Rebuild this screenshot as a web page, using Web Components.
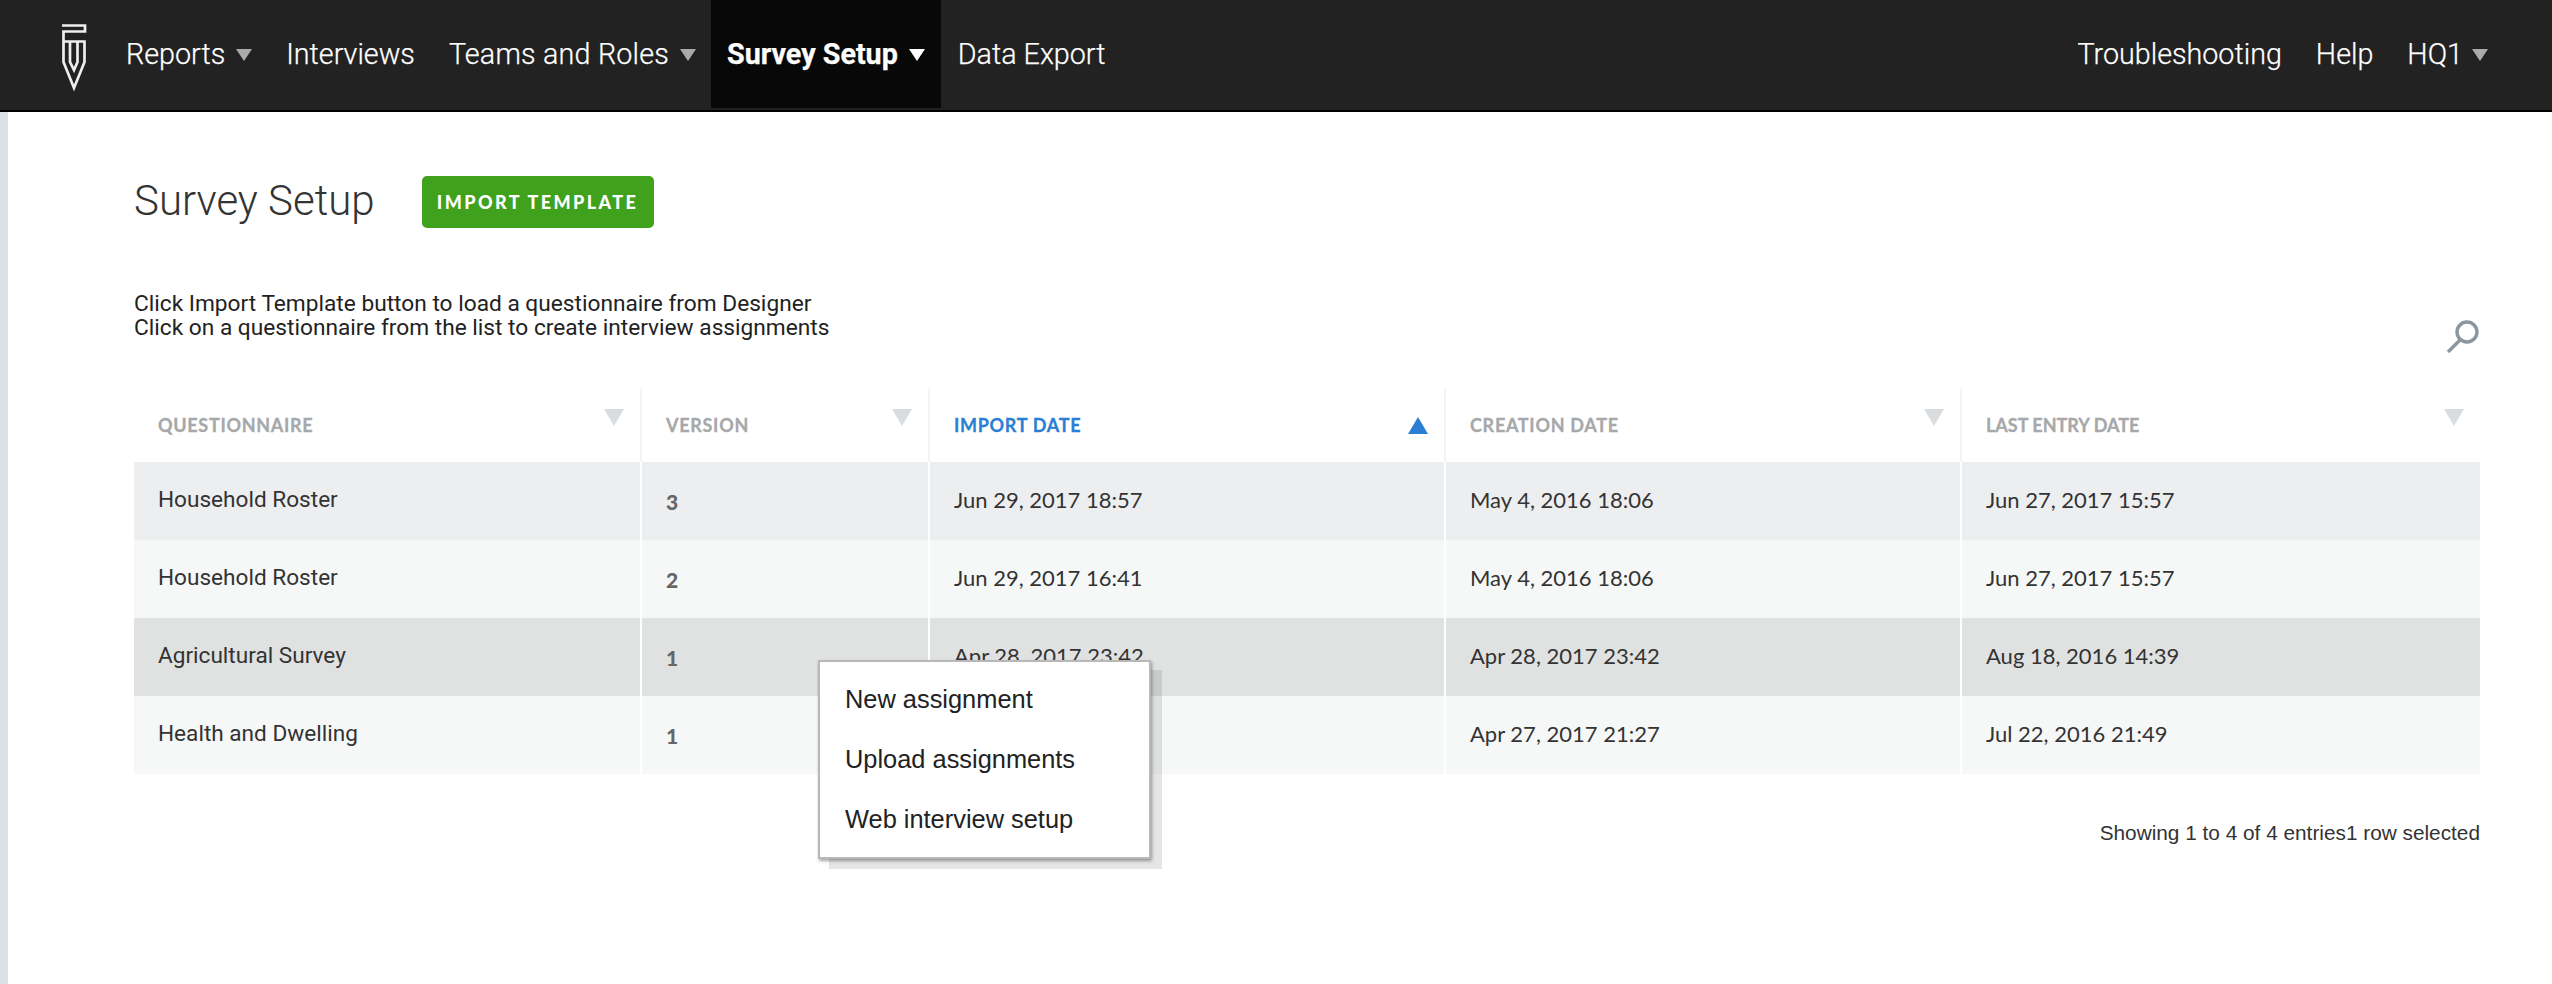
<!DOCTYPE html>
<html>
<head>
<meta charset="utf-8">
<title>Survey Setup</title>
<style>
  html, body { margin: 0; padding: 0; background: #fff; }
  body { font-family: Roboto, "Liberation Sans", sans-serif; color: #222; }
</style>
</head>
<body>
<app-header>
  <nav-item caret>Reports</nav-item>
  <nav-item>Interviews</nav-item>
  <nav-item caret style="letter-spacing: .2px">Teams and Roles</nav-item>
  <nav-item caret active>Survey Setup</nav-item>
  <nav-item>Data Export</nav-item>
  <nav-item slot="right">Troubleshooting</nav-item>
  <nav-item slot="right">Help</nav-item>
  <nav-item slot="right" caret style="--caret-gap: 9px">HQ1</nav-item>
</app-header>
<survey-page></survey-page>

<script>
class AppHeader extends HTMLElement {
  constructor() {
    super();
    const shadowRoot = this.attachShadow({mode: 'open'});
    shadowRoot.innerHTML = `<style>
      :host { display: flex; height: 110px; background: #222; border-bottom: 2px solid #000; }
      .logo { margin: 22px 19px 0 60px; width: 30px; height: 70px; flex: none; }
      .left { display: flex; }
      .right { display: flex; margin-left: auto; padding-right: 47px; }
    </style>
    <svg class="logo" viewBox="30 12 30 70" fill="none" stroke="#eee" stroke-width="2.7">
      <path d="M32 15.5H55V21.5H33.5V31.5H54.5V52L44 78L33.5 52V31.5"/>
      <path d="M40 32V52L44 60L47.5 52V32"/>
    </svg>
    <div class="left"><slot></slot></div>
    <div class="right"><slot name="right"></slot></div>`;
  }
}
window.customElements.define('app-header', AppHeader);

class NavItem extends HTMLElement {
  constructor() {
    super();
    const shadowRoot = this.attachShadow({mode: 'open'});
    shadowRoot.innerHTML = `<style>
      :host { display: flex; align-items: center; height: 108px; padding: 0 17px; color: #fff;
        font: 300 28.7px Roboto, sans-serif; -webkit-text-stroke: .25px #fff; white-space: nowrap; }
      :host([active]) { background: #080808; font-weight: 700; padding: 0 16px; margin-left: -2px; }
      .caret { display: none; width: 0; height: 0; margin: 2px 0 0 var(--caret-gap, 11px); border-style: solid;
        border-width: 12px 8px 0 8px; border-color: #aaa transparent transparent; }
      :host([caret]) .caret { display: block; }
      :host([active]) .caret { border-top-color: #fff; }
    </style>
    <slot></slot><span class="caret"></span>`;
  }
}
window.customElements.define('nav-item', NavItem);

class ImportButton extends HTMLElement {
  constructor() {
    super();
    const shadowRoot = this.attachShadow({mode: 'open'});
    shadowRoot.innerHTML = `<style>
      :host { display: flex; align-items: center; justify-content: center; width: 232px; height: 52px;
        background: #3fa11c; border-radius: 5px; color: #fff;
        font: 900 18px Lato, sans-serif; letter-spacing: 2.4px; }
    </style><slot></slot>`;
  }
}
window.customElements.define('import-button', ImportButton);

class RowMenu extends HTMLElement {
  constructor() {
    super();
    const shadowRoot = this.attachShadow({mode: 'open'});
    shadowRoot.innerHTML = `<style>
      :host { display: block; position: absolute; left: 684px; top: 272px; width: 333px; height: 199px;
        box-sizing: border-box; padding-top: 7px; background: #fff; border: 2px solid #b8b8b8;
        box-shadow: 1px 2px 3px rgba(0,0,0,.35), 11px 10px 0 rgba(0,0,0,.1);
        font: 25.4px "Liberation Sans", sans-serif; color: #222; }
      ::slotted(div) { height: 60px; line-height: 60px; padding-left: 25px; }
    </style><slot></slot>`;
  }
}
window.customElements.define('row-menu', RowMenu);

class SurveyTable extends HTMLElement {
  constructor() {
    super();
    const shadowRoot = this.attachShadow({mode: 'open'});
    const columns = ['Questionnaire', 'Version', 'Import Date', 'Creation Date', 'Last Entry Date'];
    const rows = [
      ['Household Roster', '3', 'Jun 29, 2017 18:57', 'May 4, 2016 18:06', 'Jun 27, 2017 15:57'],
      ['Household Roster', '2', 'Jun 29, 2017 16:41', 'May 4, 2016 18:06', 'Jun 27, 2017 15:57'],
      ['Agricultural Survey', '1', 'Apr 28, 2017 23:42', 'Apr 28, 2017 23:42', 'Aug 18, 2016 14:39'],
      ['Health and Dwelling', '1', '', 'Apr 27, 2017 21:27', 'Jul 22, 2016 21:49']
    ];
    const head = columns.map((c, i) =>
      `<div class="th${i === 2 ? ' sorted' : ''}"><span>${c}</span><i></i></div>`).join('');
    const body = rows.map((r, n) => `<div class="tr r${n}">` + r.map((c, i) =>
      `<div class="td c${i}">${c}</div>`).join('') + `</div>`).join('');
    shadowRoot.innerHTML = `<style>
      :host { display: block; position: relative; }
      .tr { display: grid; grid-template-columns: 508px 288px 516px 516px 518px; }
      .th { height: 74px; box-sizing: border-box; padding: 0 16px 0 24px; display: flex;
        align-items: center; justify-content: space-between; border-right: 2px solid #f4f4f4;
        font: 700 18px Lato, sans-serif; letter-spacing: .7px; text-transform: uppercase; color: #a6a8aa;
        -webkit-text-stroke: .3px currentColor; }
      .th:last-child { border-right: 0; letter-spacing: 0; }
      .th i { width: 0; height: 0; margin-top: -15px; border-style: solid; border-width: 17px 10px 0 10px;
        border-color: #d9dde0 transparent transparent; }
      .th.sorted { color: #2a7fd4; }
      .th.sorted i { margin-top: 0; border-width: 0 10px 17px 10px; border-color: transparent transparent #2a7fd4; }
      .td { height: 78px; box-sizing: border-box; padding-left: 24px; border-right: 2px solid #fff;
        font: 22px/76px Lato, sans-serif; color: #333; }
      .td:last-child { border-right: 0; }
      .td.c0 { font: 22.6px/76px Roboto, sans-serif; color: #333; }
      .td.c1 { font: 900 21px/80px Lato, sans-serif; color: #666; }
      .r0 { background: #edeef0; }
      .r1, .r3 { background: #f6f8f8; }
      .r2 { background: #e0e1e1; }
    </style>
    <div class="tr">${head}</div>${body}<slot></slot>`;
  }
}
window.customElements.define('survey-table', SurveyTable);

class SurveyPage extends HTMLElement {
  constructor() {
    super();
    const shadowRoot = this.attachShadow({mode: 'open'});
    shadowRoot.innerHTML = `<style>
      :host { display: block; height: 872px; box-sizing: border-box; padding: 64px 72px 0 126px;
        border-left: 8px solid #dde1e5; }
      .title { display: flex; align-items: center; gap: 47px; height: 52px; }
      h1 { margin: -4px 0 0; font: 300 42px Roboto, sans-serif; color: #333; }
      .info { display: flex; justify-content: space-between; height: 96px; margin-top: 64px; }
      p { margin: 0; font: 22.7px/24px Roboto, sans-serif; color: #222; }
      .search { width: 34px; height: 34px; margin-top: 27px; }
      .footer { margin-top: 47px; text-align: right; font: 20.8px/24px "Liberation Sans", sans-serif; color: #333; }
    </style>
    <div class="title"><h1>Survey Setup</h1><import-button>IMPORT TEMPLATE</import-button></div>
    <div class="info">
      <p>Click Import Template button to load a questionnaire from Designer<br>Click on a questionnaire from the list to create interview assignments</p>
      <svg class="search" viewBox="0 0 34 34" fill="none" stroke="#8a979e" stroke-width="3.4">
        <circle cx="21" cy="13" r="10"/><path d="M14 21L2 33"/>
      </svg>
    </div>
    <survey-table>
      <row-menu><div>New assignment</div><div>Upload assignments</div><div>Web interview setup</div></row-menu>
    </survey-table>
    <div class="footer">Showing 1 to 4 of 4 entries1 row selected</div>`;
  }
}
window.customElements.define('survey-page', SurveyPage);
</script>
</body>
</html>
